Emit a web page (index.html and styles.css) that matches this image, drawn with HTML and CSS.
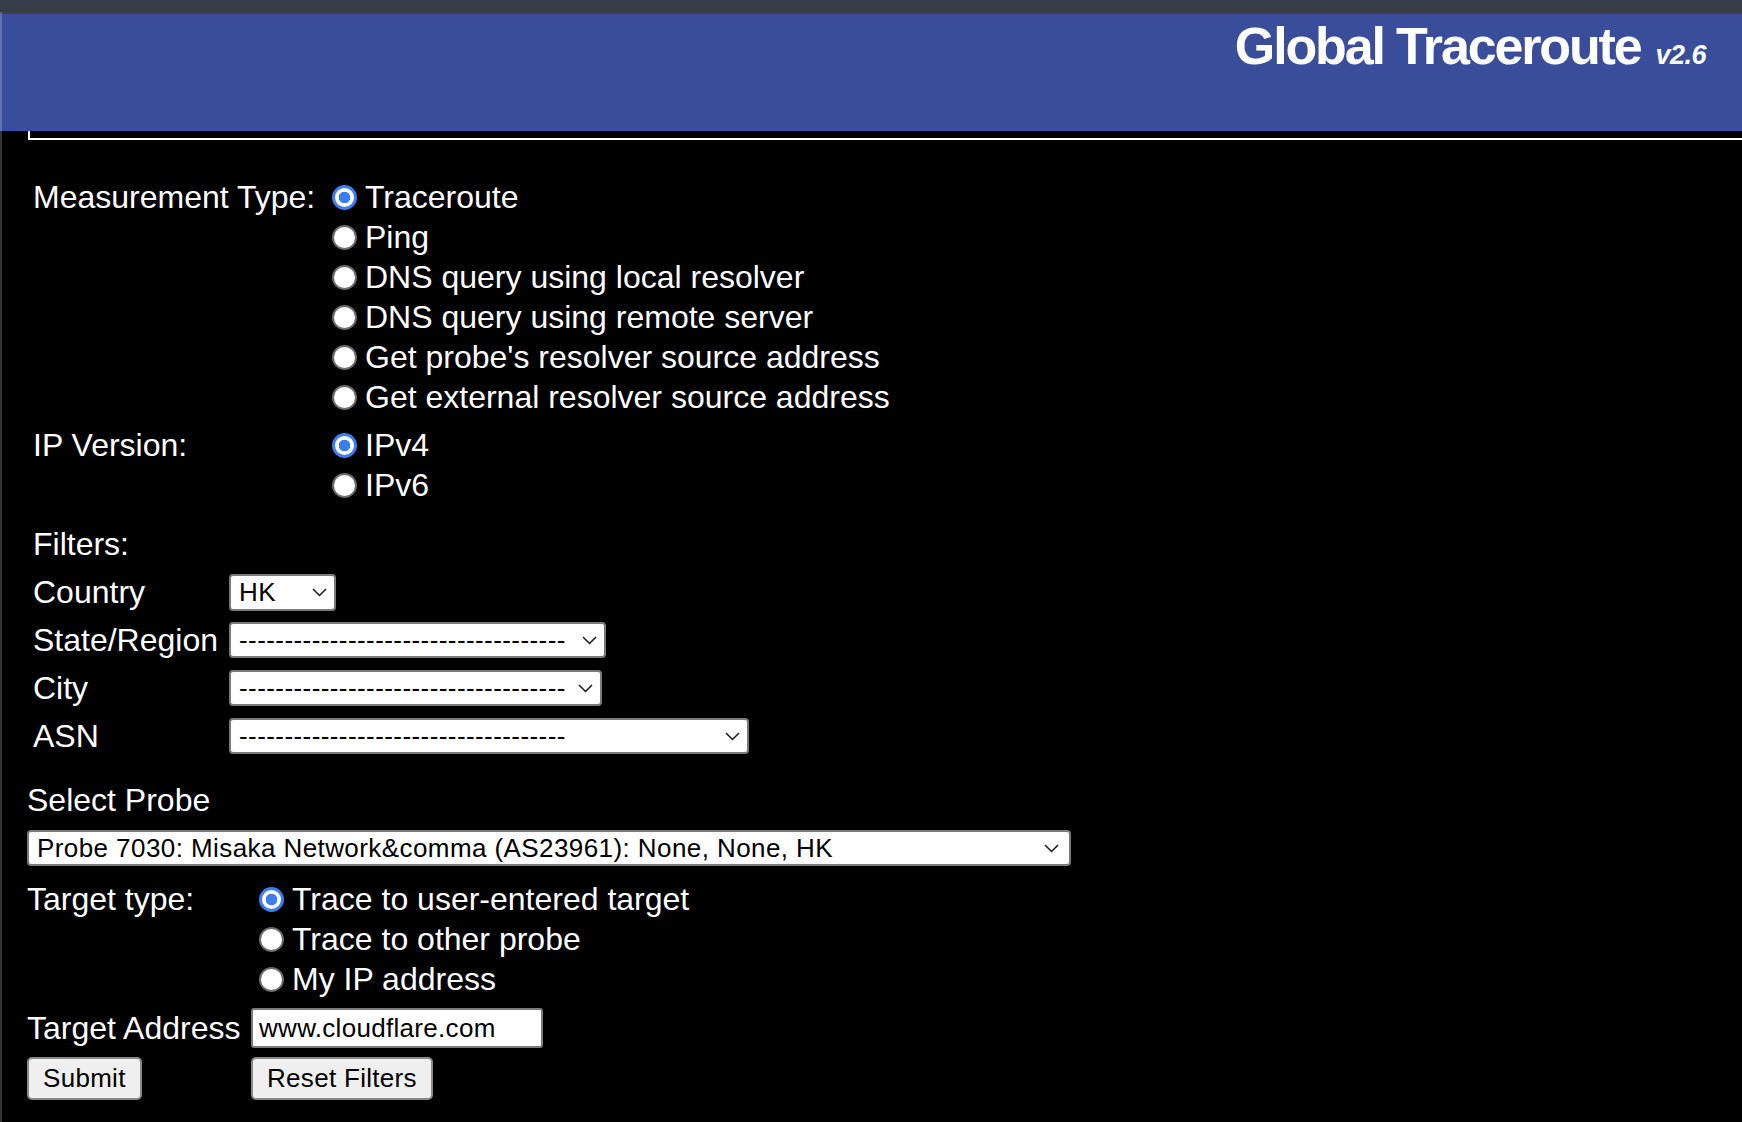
FILE: index.html
```html
<!DOCTYPE html>
<html lang="en">
<head>
<meta charset="utf-8">
<title>Global Traceroute</title>
<link rel="stylesheet" href="styles.css">
</head>
<body>
<div class="topstrip"></div>
<header class="banner">
  <h1 class="brand"><span class="title">Global Traceroute</span><span class="ver">v2.6</span></h1>
</header>
<div class="rule"></div>

<main class="page">
  <form class="form">
    <div class="upper">
      <div class="opt opt-meas">
        <div class="lbl">Measurement Type:</div>
        <div class="radios">
          <label class="r"><input type="radio" name="mtype" checked><span>Traceroute</span></label>
          <label class="r"><input type="radio" name="mtype"><span>Ping</span></label>
          <label class="r"><input type="radio" name="mtype"><span>DNS query using local resolver</span></label>
          <label class="r"><input type="radio" name="mtype"><span>DNS query using remote server</span></label>
          <label class="r"><input type="radio" name="mtype"><span>Get probe's resolver source address</span></label>
          <label class="r"><input type="radio" name="mtype"><span>Get external resolver source address</span></label>
        </div>
      </div>
      <div class="opt opt-meas opt-ip">
        <div class="lbl">IP Version:</div>
        <div class="radios">
          <label class="r"><input type="radio" name="ipv" checked><span>IPv4</span></label>
          <label class="r"><input type="radio" name="ipv"><span>IPv6</span></label>
        </div>
      </div>

      <div class="filters">
        <div class="lbl flt-head">Filters:</div>
        <div class="frow">
          <div class="lbl">Country</div>
          <span class="sel sel-country"><select><option>HK</option></select><svg class="chev" viewBox="0 0 15 9"><path d="M1 1 L7.5 7.5 L14 1"/></svg></span>
        </div>
        <div class="frow">
          <div class="lbl">State/Region</div>
          <span class="sel sel-state"><select><option>------------------------------------</option></select><svg class="chev" viewBox="0 0 15 9"><path d="M1 1 L7.5 7.5 L14 1"/></svg></span>
        </div>
        <div class="frow">
          <div class="lbl">City</div>
          <span class="sel sel-city"><select><option>------------------------------------</option></select><svg class="chev" viewBox="0 0 15 9"><path d="M1 1 L7.5 7.5 L14 1"/></svg></span>
        </div>
        <div class="frow">
          <div class="lbl">ASN</div>
          <span class="sel sel-asn"><select><option>------------------------------------</option></select><svg class="chev" viewBox="0 0 15 9"><path d="M1 1 L7.5 7.5 L14 1"/></svg></span>
        </div>
      </div>
    </div>

    <div class="lower">
      <div class="lbl probe-head">Select Probe</div>
      <span class="sel sel-probe"><select><option>Probe 7030: Misaka Network&amp;comma (AS23961): None, None, HK</option></select><svg class="chev" viewBox="0 0 15 9"><path d="M1 1 L7.5 7.5 L14 1"/></svg></span>

      <div class="opt opt-target">
        <div class="lbl">Target type:</div>
        <div class="radios">
          <label class="r"><input type="radio" name="ttype" checked><span>Trace to user-entered target</span></label>
          <label class="r"><input type="radio" name="ttype"><span>Trace to other probe</span></label>
          <label class="r"><input type="radio" name="ttype"><span>My IP address</span></label>
        </div>
      </div>

      <div class="opt opt-addr">
        <div class="lbl">Target Address</div>
        <input class="txt" type="text" value="www.cloudflare.com">
      </div>

      <div class="opt opt-btns">
        <div><button type="button" class="btn">Submit</button></div>
        <div><button type="button" class="btn">Reset Filters</button></div>
      </div>
    </div>
  </form>
</main>
</body>
</html>
```

FILE: styles.css
```css
* { box-sizing: border-box; }

html, body {
  margin: 0;
  padding: 0;
  background: #000;
}

body {
  color: #fff;
  font-family: "Liberation Sans", Arial, Helvetica, sans-serif;
  min-height: 1122px;
  position: relative;
}

body::before {
  content: "";
  position: absolute;
  left: 0;
  top: 12px;
  bottom: 0;
  width: 2px;
  background: rgba(255, 255, 255, 0.2);
  z-index: 5;
}

.topstrip {
  height: 14px;
  background: #373c4a;
  border-bottom: 2px solid #3d4048;
}

.banner {
  height: 117px;
  background: #394d9b;
  display: flex;
  justify-content: flex-end;
  padding: 6px 36px 0 0;
}

.brand {
  margin: 0;
  display: flex;
  align-items: baseline;
  line-height: 1;
  font-weight: bold;
  color: #fff;
}

.title {
  font-size: 52px;
  letter-spacing: -2.15px;
}

.ver {
  font-size: 27px;
  font-style: italic;
  letter-spacing: -0.5px;
  margin-left: 15px;
}

.rule {
  margin-left: 28px;
  height: 9px;
  border-left: 2px solid #fff;
  border-bottom: 2px solid #fff;
}

.page {
  padding-top: 37px;
}

.lbl {
  font-size: 32px;
  line-height: 40px;
  white-space: nowrap;
}

.upper {
  padding-left: 33px;
}

.opt {
  display: grid;
}

.opt-meas {
  grid-template-columns: 299px auto;
}

.opt-ip {
  margin-top: 8px;
}

.radios {
  display: flex;
  flex-direction: column;
}

.r {
  display: flex;
  align-items: center;
  height: 40px;
  font-size: 32px;
  white-space: nowrap;
}

.r span {
  margin-left: 8px;
}

.r input {
  appearance: none;
  -webkit-appearance: none;
  margin: 0;
  width: 25px;
  height: 25px;
  border-radius: 50%;
  background: #fff;
  border: 2px solid #6c6c6c;
  flex: none;
}

.r input:checked {
  border: 3px solid #3b7ef4;
  background: radial-gradient(circle closest-side, #3b7ef4 0, #3b7ef4 58%, #fff 64%);
}

.filters {
  margin-top: 19px;
}

.flt-head {
  height: 40px;
  margin-bottom: 4px;
}

.frow {
  display: grid;
  grid-template-columns: 196px auto;
  align-items: center;
  height: 48px;
}

.sel {
  position: relative;
  display: inline-block;
}

.sel select {
  appearance: none;
  -webkit-appearance: none;
  display: block;
  width: 100%;
  height: 36px;
  margin: 0;
  padding: 0 30px 0 8px;
  background: #fff;
  color: #000;
  border: 2px solid #7a7a7a;
  border-radius: 4px;
  font-family: "Liberation Sans", Arial, Helvetica, sans-serif;
  font-size: 26px;
  letter-spacing: 0.42px;
  line-height: 32px;
}

.chev {
  position: absolute;
  right: 9px;
  top: 50%;
  width: 15px;
  height: 9px;
  margin-top: -4px;
  pointer-events: none;
}

.chev path {
  fill: none;
  stroke: #1a1a1a;
  stroke-width: 1.5;
}

.sel-country { width: 107px; }
.sel-country select { height: 37px; }
.sel-state { width: 377px; }
.sel-city { width: 373px; }
.sel-asn { width: 520px; }
.sel-probe { width: 1044px; display: block; margin-top: 10px; }
.sel-probe .chev { right: 12px; }

.lower {
  padding-left: 27px;
  margin-top: 20px;
}

.probe-head {
  height: 40px;
}

.opt-target {
  grid-template-columns: 232px auto;
  margin-top: 13px;
}

.opt-addr,
.opt-btns {
  grid-template-columns: 224px auto;
  align-items: center;
}

.opt-addr {
  margin-top: 9px;
}

.txt {
  appearance: none;
  -webkit-appearance: none;
  width: 292px;
  height: 40px;
  margin: 0;
  padding: 0 6px;
  background: #fff;
  color: #000;
  border: 2px solid #7a7a7a;
  border-radius: 3px;
  font-family: "Liberation Sans", Arial, Helvetica, sans-serif;
  font-size: 26px;
  letter-spacing: 0.3px;
}

.opt-btns {
  margin-top: 9px;
}

.btn {
  height: 43px;
  margin: 0;
  padding: 0 14px;
  background: #efefef;
  color: #000;
  border: 2px solid #8a8a8a;
  border-radius: 5px;
  font-family: "Liberation Sans", Arial, Helvetica, sans-serif;
  font-size: 26px;
  letter-spacing: 0.3px;
}
```
